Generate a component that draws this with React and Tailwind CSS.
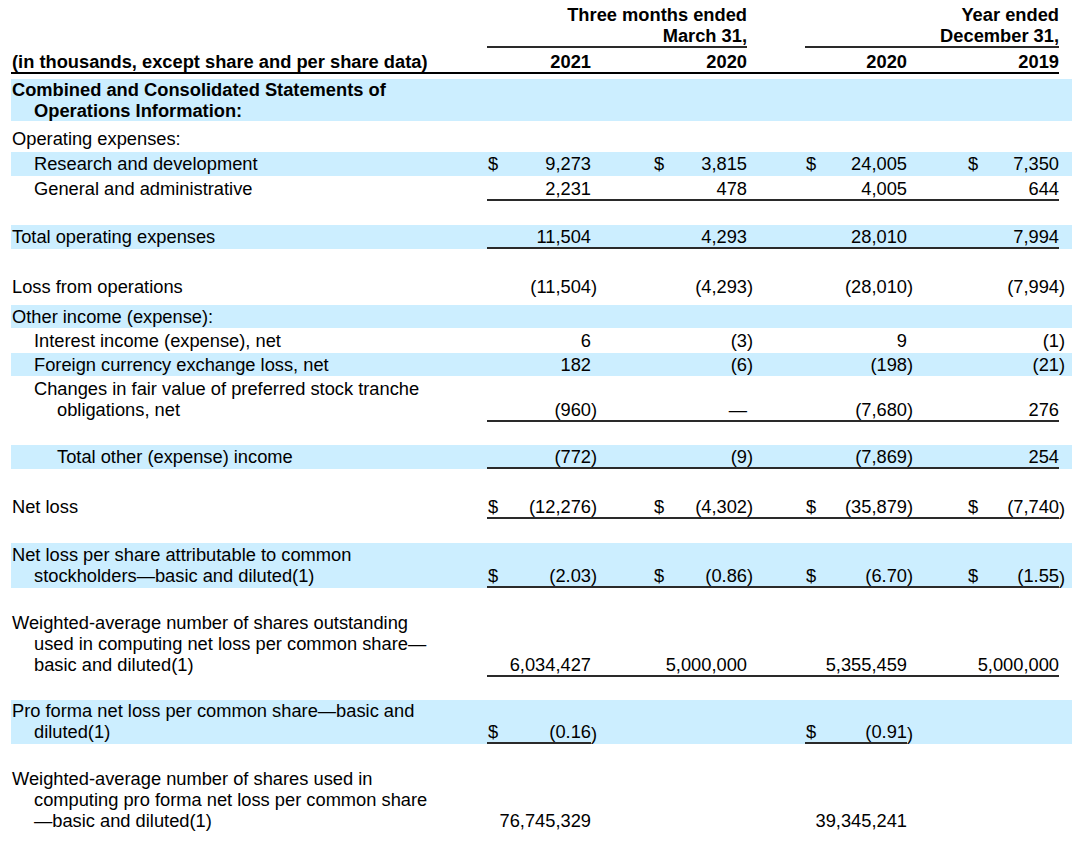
import clsx from 'clsx';

// label | c1 | g1 | c2 | g2 | c3 | g3 | c4 | g4
const COLS = 'grid grid-cols-[476px_104px_62px_94px_58px_102px_60px_92px_13px]';
const INDENT = ['pl-px', 'pl-[23px]', 'pl-[46px]'];

const rows = [
  { spacer: 'h-[5px]' },
  {
    band: true,
    bold: true,
    pt: 'pt-0',
    lines: [[0, 'Combined and Consolidated Statements of'], [1, 'Operations Information:']],
  },
  { pt: 'pt-[7px]', pb: 'pb-[3px]', lines: [[0, 'Operating expenses:']] },
  {
    band: true,
    pt: 'pt-px',
    pb: 'pb-[2px]',
    lines: [[1, 'Research and development']],
    vals: ['$9,273', '$3,815', '$24,005', '$7,350'],
  },
  {
    pt: 'pt-[2px]',
    lines: [[1, 'General and administrative']],
    vals: ['2,231', '478', '4,005', '644'],
    line: 'all',
  },
  { spacer: 'h-[24px]' },
  {
    band: true,
    pt: 'pt-px',
    lines: [[0, 'Total operating expenses']],
    vals: ['11,504', '4,293', '28,010', '7,994'],
    line: 'all',
  },
  { spacer: 'h-[25px]' },
  {
    pt: 'pt-[2px]',
    pb: 'pb-[8px]',
    lines: [[0, 'Loss from operations']],
    vals: ['(11,504)', '(4,293)', '(28,010)', '(7,994)'],
  },
  { band: true, pt: 'pt-px', pb: 'pb-px', lines: [[0, 'Other income (expense):']] },
  {
    pt: 'pt-[2px]',
    pb: 'pb-[2px]',
    lines: [[1, 'Interest income (expense), net']],
    vals: ['6', '(3)', '9', '(1)'],
  },
  {
    band: true,
    pt: 'pt-px',
    pb: 'pb-px',
    lines: [[1, 'Foreign currency exchange loss, net']],
    vals: ['182', '(6)', '(198)', '(21)'],
  },
  {
    pt: 'pt-[2px]',
    lines: [[1, 'Changes in fair value of preferred stock tranche'], [2, 'obligations, net']],
    vals: ['(960)', '—', '(7,680)', '276'],
    line: 'all',
  },
  { spacer: 'h-[23px]' },
  {
    band: true,
    pt: 'pt-px',
    lines: [[2, 'Total other (expense) income']],
    vals: ['(772)', '(9)', '(7,869)', '254'],
    line: 'all',
  },
  { spacer: 'h-[25px]' },
  {
    pt: 'pt-[2px]',
    lines: [[0, 'Net loss']],
    vals: ['$(12,276)', '$(4,302)', '$(35,879)', '$(7,740)'],
    line: 'all',
  },
  { spacer: 'h-[24px]' },
  {
    band: true,
    pt: 'pt-px',
    lines: [[0, 'Net loss per share attributable to common'], [1, 'stockholders—basic and diluted(1)']],
    vals: ['$(2.03)', '$(0.86)', '$(6.70)', '$(1.55)'],
    line: 'all',
  },
  { spacer: 'h-[23px]' },
  {
    pt: 'pt-px',
    lines: [
      [0, 'Weighted-average number of shares outstanding'],
      [1, 'used in computing net loss per common share—'],
      [1, 'basic and diluted(1)'],
    ],
    vals: ['6,034,427', '5,000,000', '5,355,459', '5,000,000'],
    line: 'all',
  },
  { spacer: 'h-[23px]' },
  {
    band: true,
    pt: 'pt-0',
    lines: [[0, 'Pro forma net loss per common share—basic and'], [1, 'diluted(1)']],
    vals: ['$(0.16)', '', '$(0.91)', ''],
    line: 'pro',
  },
  { spacer: 'h-[23px]' },
  {
    pt: 'pt-px',
    lines: [
      [0, 'Weighted-average number of shares used in'],
      [1, 'computing pro forma net loss per common share'],
      [1, '—basic and diluted(1)'],
    ],
    vals: ['76,745,329', '', '39,345,241', ''],
  },
];

function parse(raw) {
  let v = raw;
  const dollar = v.startsWith('$');
  if (dollar) v = v.slice(1);
  const paren = v.endsWith(')');
  if (paren) v = v.slice(0, -1);
  return { dollar, paren, v };
}

function Row({ row }) {
  const cells = [];
  (row.vals || ['', '', '', '']).forEach((raw, i) => {
    const { dollar, paren, v } = parse(raw);
    const cLine = row.line === 'all' || (row.line === 'pro' && (i === 0 || i === 2));
    const gLine = row.line === 'all' && i < 3;
    cells.push(
      <div
        key={'c' + i}
        className={clsx('flex items-end justify-between', cLine && 'border-b-2 border-[#2a2a2a]')}
      >
        <span className="pl-px">{dollar ? '$' : ''}</span>
        <span>{v}</span>
      </div>
    );
    cells.push(
      <div key={'g' + i} className={clsx('flex items-end', gLine && 'border-b-2 border-[#2a2a2a]')}>
        <span>{paren ? ')' : ''}</span>
      </div>
    );
  });

  return (
    <div className={clsx(COLS, row.band && 'bg-[#cceeff]', row.pt, row.pb)}>
      <div className={clsx(row.bold && 'font-bold', row.line && 'border-b-2 border-transparent')}>
        {row.lines.map(([lvl, text], i) => (
          <div key={i} className={clsx('whitespace-nowrap', INDENT[lvl])}>
            {text}
          </div>
        ))}
      </div>
      {cells}
    </div>
  );
}

export default function App() {
  return (
    <div className="min-h-screen w-[1080px] bg-white text-black font-['Liberation_Sans',Arial,sans-serif] text-[18.3px] leading-[21px]">
      <div className="ml-[11px] w-[1061px]">
        {/* period headings */}
        <div className={clsx(COLS, 'pt-[4px] font-bold')}>
          <div />
          <div className="col-span-3 border-b-2 border-[#2a2a2a] text-right">
            <div>Three months ended</div>
            <div>March 31,</div>
          </div>
          <div />
          <div className="col-span-3 border-b-2 border-[#2a2a2a] text-right">
            <div>Year ended</div>
            <div>December 31,</div>
          </div>
          <div />
        </div>

        {/* years */}
        <div className={clsx(COLS, 'pt-[3px] font-bold')}>
          <div className="border-b-2 border-black pl-px whitespace-nowrap">
            (in thousands, except share and per share data)
          </div>
          <div className="border-b-2 border-black text-right">2021</div>
          <div className="border-b-2 border-black" />
          <div className="border-b-2 border-black text-right">2020</div>
          <div className="border-b-2 border-black" />
          <div className="border-b-2 border-black text-right">2020</div>
          <div className="border-b-2 border-black" />
          <div className="border-b-2 border-black text-right">2019</div>
          <div />
        </div>

        {rows.map((row, i) =>
          row.spacer ? <div key={i} className={row.spacer} /> : <Row key={i} row={row} />
        )}
      </div>
    </div>
  );
}
